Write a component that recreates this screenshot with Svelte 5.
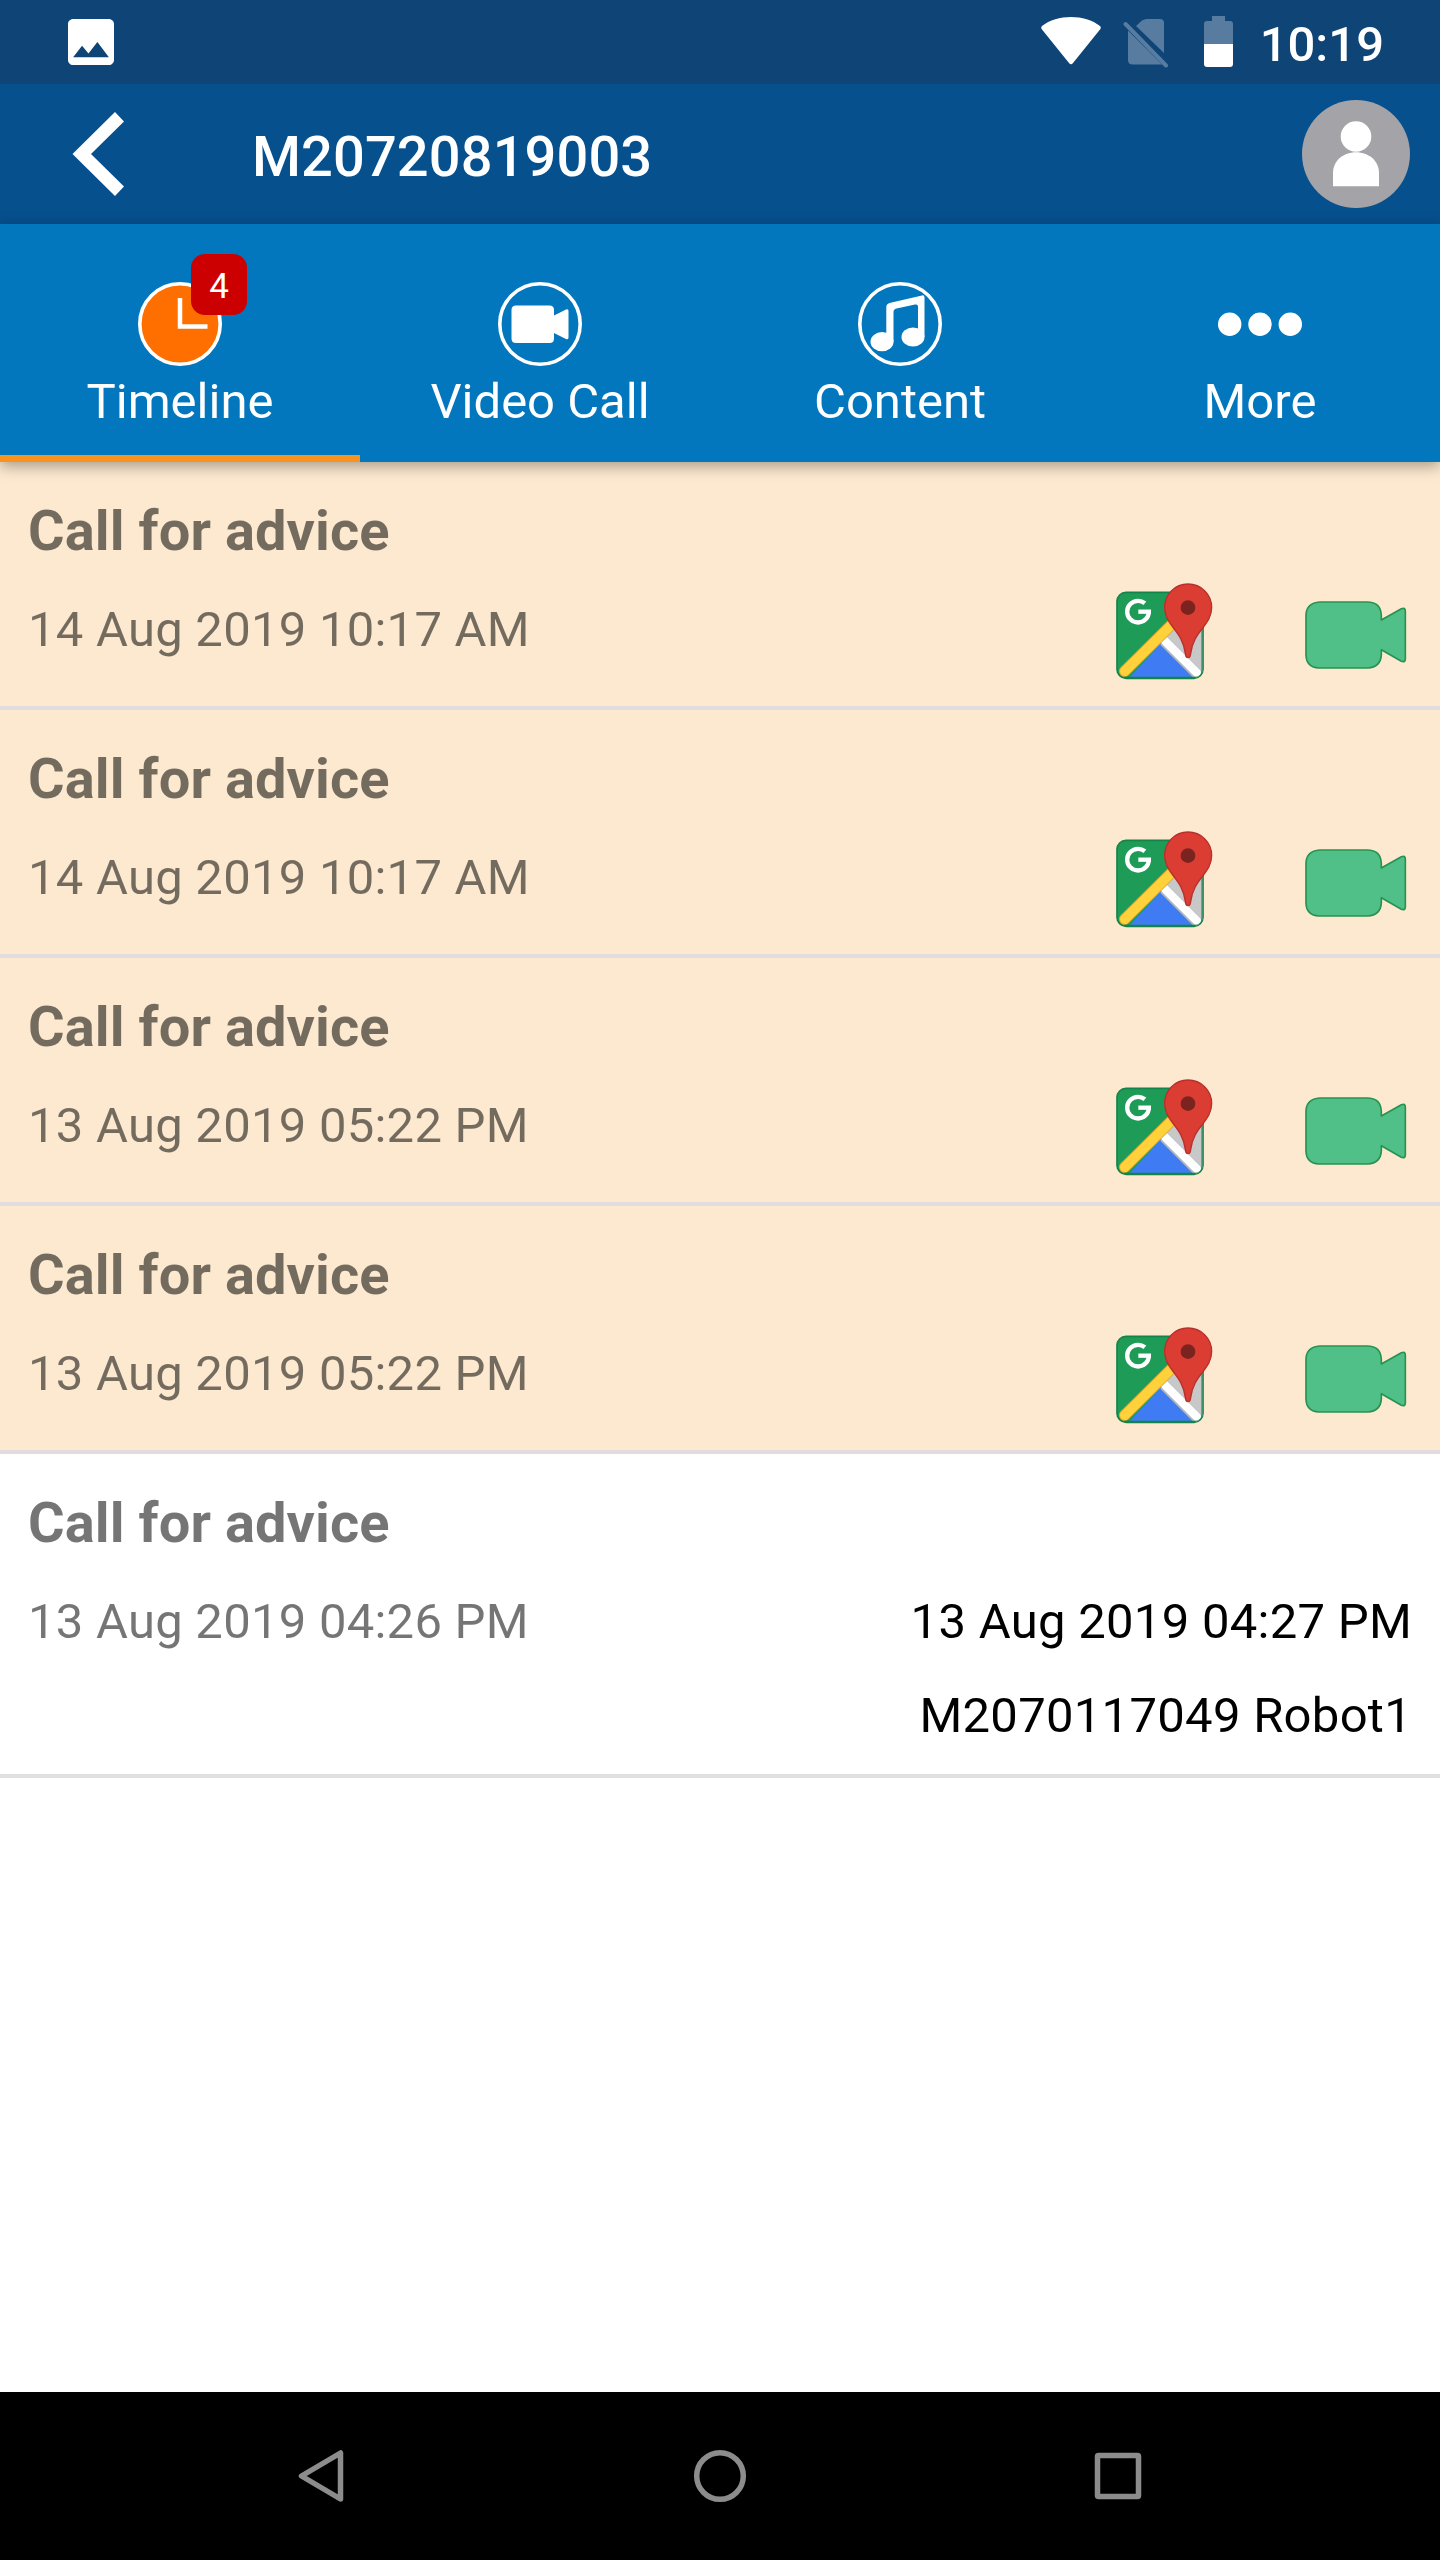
<script>
  let activeTab = 'timeline';

  const title = 'M20720819003';

  const tabs = [
    { id: 'timeline', label: 'Timeline', badge: 4 },
    { id: 'video', label: 'Video Call' },
    { id: 'content', label: 'Content' },
    { id: 'more', label: 'More' }
  ];

  const calls = [
    { name: 'Call for advice', date: '14 Aug 2019 10:17 AM', open: true },
    { name: 'Call for advice', date: '14 Aug 2019 10:17 AM', open: true },
    { name: 'Call for advice', date: '13 Aug 2019 05:22 PM', open: true },
    { name: 'Call for advice', date: '13 Aug 2019 05:22 PM', open: true },
    {
      name: 'Call for advice',
      date: '13 Aug 2019 04:26 PM',
      open: false,
      answered: '13 Aug 2019 04:27 PM',
      by: 'M2070117049 Robot1'
    }
  ];
</script>

<div class="screen">
  <div class="status-bar">
    <svg class="photo" width="46" height="46" viewBox="3 3 18 18">
      <path fill="#fff" d="M21 19V5c0-1.1-.9-2-2-2H5c-1.1 0-2 .9-2 2v14c0 1.1.9 2 2 2h14c1.1 0 2-.9 2-2zM8.5 13.5l2.5 3.01L14.5 12l4.5 6H5l3.5-4.5z" />
    </svg>
    <div class="status-icons">
      <svg width="60" height="49" viewBox="0 0 60 49">
        <path fill="#fff" d="M1 10C16-2 44-2 59 10Q60.500 11.500 59 13.500L32 47Q30 49.500 28 47L1 13.500Q-.5 11.500 1 10Z" />
      </svg>
      <svg class="sim" width="46" height="50" viewBox="0 0 46 50">
        <path fill="#587c9f" d="M13 7L19 1.500Q21 0 24 0H37Q41 0 41 4V34ZM5 11.500L39 45.500H10Q5 45.500 5 41Z" />
        <path stroke="#587c9f" stroke-width="4" stroke-linecap="round" d="M2.500 5L43 46.500" />
      </svg>
      <svg class="battery" width="29" height="51" viewBox="0 0 29 51">
        <path fill="#587c9f" d="M8 0H21V5H26Q29 5 29 8V28H0V8Q0 5 3 5H8Z" />
        <path fill="#fff" d="M0 28H29V48Q29 51 26 51H3Q0 51 0 48Z" />
      </svg>
      <span class="time">10:19</span>
    </div>
  </div>

  <header class="app-bar">
    <svg class="back" width="53" height="86" viewBox="0 0 53 86">
      <path fill="#fff" d="M43 1L52 10.500L19 43L52 75.500L43 85L0.500 43Z" />
    </svg>
    <h1>{title}</h1>
    <svg class="avatar" width="108" height="108" viewBox="0 0 108 108">
      <circle cx="54" cy="54" r="54" fill="#a3a3a8" />
      <circle cx="54" cy="36.500" r="15.300" fill="#fff" />
      <path fill="#fff" d="M31 86.300V73C31 61 41 52.300 54 52.300S77 61 77 73V86.300Z" />
    </svg>
  </header>

  <nav class="tabs">
    {#each tabs as tab}
      <button class="tab" class:active={tab.id === activeTab} on:click={() => (activeTab = tab.id)}>
        <span class="tab-icon">
          <svg width="84" height="84" viewBox="0 0 84 84">
            {#if tab.id === 'timeline'}
              <circle cx="42" cy="42" r="40.200" fill="#ff6f00" stroke="#fff" stroke-width="3.600" />
              <path fill="none" stroke="#fff" stroke-width="4.500" d="M42 16V44.500H69.500" />
            {:else if tab.id === 'video'}
              <circle cx="42" cy="42" r="40.200" fill="none" stroke="#fff" stroke-width="3.600" />
              <path fill="#fff" d="M18 23.500H51.500Q56 23.500 56 28V33.500L68 27.500Q70.500 26.500 70.500 29V55.500Q70.500 58 68 57L56 51V56.500Q56 61 51.500 61H18Q13.500 61 13.500 56.500V28Q13.500 23.500 18 23.500Z" />
            {:else if tab.id === 'content'}
              <circle cx="42" cy="42" r="40.200" fill="none" stroke="#fff" stroke-width="3.600" />
              <ellipse cx="24" cy="59.700" rx="11.500" ry="9.600" fill="#fff" />
              <ellipse cx="55" cy="55" rx="11.500" ry="9.600" fill="#fff" />
              <path fill="#fff" d="M28.300 60V25Q28.300 22 31.500 21L64 13.400Q66.500 13 66.500 15.500V55H60V24.500Q60 22 57 22.600L38.500 26.500Q35.500 27.200 35.500 30V60Z" />
            {:else}
              <circle cx="11.700" cy="42.300" r="11.700" fill="#fff" />
              <circle cx="42" cy="42.300" r="11.700" fill="#fff" />
              <circle cx="72.300" cy="42.300" r="11.700" fill="#fff" />
            {/if}
          </svg>
          {#if tab.badge}
            <span class="badge">{tab.badge}</span>
          {/if}
        </span>
        <span class="tab-label">{tab.label}</span>
      </button>
    {/each}
  </nav>

  <main class="list">
    {#each calls as call}
      <div class="row" class:open={call.open}>
        <div class="info">
          <div class="name">{call.name}</div>
          <div class="date">{call.date}</div>
        </div>
        {#if call.open}
          <div class="actions">
            <svg width="97" height="97" viewBox="78 69 291 291">
              <defs>
                <clipPath id="map-tile"><rect x="82" y="98" width="256" height="256" rx="25" /></clipPath>
              </defs>
              <rect x="81" y="97" width="258" height="258" rx="27" fill="#1e9b57" stroke="#14834a" stroke-width="5" />
              <g clip-path="url(#map-tile)">
                <path fill="#c8c8c8" d="M340 150V345L215 235L255 185Z" />
                <path fill="#3f7cf3" d="M213 250L120 351H314Z" />
                <path stroke="#aeb7c4" stroke-width="32" d="M222 243L326 347" />
                <path stroke="#fff" stroke-width="25" stroke-linecap="round" d="M222 240L321 339" />
                <path stroke="#e4ad31" stroke-width="34" stroke-linecap="round" d="M104 334L250 189" />
                <path stroke="#ffd23c" stroke-width="28" stroke-linecap="round" d="M104 334L250 189" />
                <path fill="none" stroke="#14834a" stroke-width="7" d="M100 354H314Q338 354 338 330V200" />
              </g>
              <circle cx="144" cy="155" r="32.500" fill="none" stroke="#fff" stroke-width="13" pathLength="360" stroke-dasharray="308 52" />
              <path stroke="#fff" stroke-width="13" d="M145 155H183" />
              <path fill="#db3d33" stroke="#b92f2b" stroke-width="4" d="M294 72C254 72 224 104 224 142C224 198 278 210 286 281C287 290 289 293 294 293S301 290 302 281C310 210 365 198 365 142C365 104 334 72 294 72Z" />
              <circle cx="294" cy="143" r="22" fill="#7b231f" />
            </svg>
            <svg width="102" height="68" viewBox="646 124 306 204">
              <path fill="#50c088" stroke="#279350" stroke-width="5" stroke-linejoin="round" d="M690 127H832Q874 127 875 168V181L935 147Q947 143 947 154V298Q947 309 935 305L875 270V285Q873 323 834 325H688Q650 323 649 286V166Q650 130 690 127Z" />
            </svg>
          </div>
        {:else}
          <div class="answer">
            <div>{call.answered}</div>
            <div>{call.by}</div>
          </div>
        {/if}
      </div>
    {/each}
  </main>

  <footer class="nav-bar">
    <svg width="56" height="56" viewBox="0 0 56 56">
      <path d="M46.500 5V51L7.500 28Z" />
    </svg>
    <svg width="56" height="56" viewBox="0 0 56 56">
      <circle cx="28" cy="28" r="23.300" />
    </svg>
    <svg width="56" height="56" viewBox="0 0 56 56">
      <rect x="7.500" y="7.500" width="41" height="41" rx="1" />
    </svg>
  </footer>
</div>

<style>
  :global(body) {
    margin: 0;
    background: #fff;
  }

  .screen {
    display: flex;
    flex-direction: column;
    width: 1440px;
    height: 2560px;
    background: #fff;
    font-family: Roboto, sans-serif;
    overflow: hidden;
  }

  svg {
    display: block;
    flex: none;
  }

  .status-bar {
    display: flex;
    justify-content: space-between;
    height: 84px;
    box-sizing: border-box;
    padding: 0 56px 0 68px;
    background: #0f4477;
  }

  .photo {
    margin-top: 19px;
  }

  .status-icons {
    display: flex;
    align-items: flex-start;
    padding-top: 16px;
  }

  .sim {
    margin: 3px 35px 0 22px;
  }

  .time {
    margin: 0 0 0 27px;
    color: #fff;
    font-size: 49px;
    font-weight: 500;
    line-height: 58px;
  }

  .app-bar {
    display: flex;
    align-items: center;
    height: 140px;
    box-sizing: border-box;
    padding: 0 30px 0 72px;
    background: #06508e;
  }

  h1 {
    flex: 1;
    margin: 6px 0 0 127px;
    color: #fff;
    font-size: 56px;
    font-weight: 500;
    letter-spacing: 0.1px;
    line-height: 66px;
  }

  .tabs {
    position: relative;
    z-index: 1;
    display: grid;
    grid-template-columns: repeat(4, 1fr);
    height: 238px;
    background: #0277bd;
    box-shadow: 0 4px 14px rgba(0, 0, 0, 0.35);
  }

  .tab {
    display: flex;
    flex-direction: column;
    align-items: center;
    gap: 7px;
    padding: 58px 0 0;
    border: 0;
    border-bottom: 7px solid transparent;
    background: none;
    color: #fff;
    font-family: inherit;
  }

  .tab.active {
    border-bottom-color: #f7931e;
  }

  .tab-icon {
    position: relative;
  }

  .badge {
    position: absolute;
    top: -28px;
    left: 53px;
    width: 56px;
    height: 61px;
    border-radius: 14px;
    background: #cc0000;
    font-size: 35px;
    line-height: 65px;
    text-align: center;
  }

  .tab-label {
    font-size: 49px;
    line-height: 58px;
  }

  .list {
    flex: 1;
  }

  .row {
    display: flex;
    justify-content: space-between;
    min-height: 248px;
    box-sizing: border-box;
    padding: 36px 28px 0;
    border-bottom: 4px solid #e0e0e0;
  }

  .row.open {
    background: #fde9d0;
    border-bottom-color: #e0dce0;
  }

  .row:not(.open) {
    padding-bottom: 29px;
  }

  .info {
    color: rgba(0, 0, 0, 0.54);
  }

  .name {
    font-size: 56px;
    font-weight: 700;
    letter-spacing: 0.08px;
    line-height: 66px;
  }

  .date {
    margin-top: 37px;
    font-size: 49px;
    letter-spacing: 0.25px;
    line-height: 58px;
  }

  .actions {
    display: flex;
    align-items: flex-start;
    gap: 92px;
    padding: 85px 5px 0 0;
  }

  .actions svg:last-child {
    margin-top: 18px;
  }

  .answer {
    display: flex;
    flex-direction: column;
    gap: 36px;
    padding-top: 103px;
    color: #000;
    font-size: 49px;
    letter-spacing: 0.28px;
    line-height: 58px;
    text-align: right;
  }

  .nav-bar {
    display: flex;
    align-items: center;
    justify-content: center;
    gap: 342px;
    height: 168px;
    background: #000;
  }

  .nav-bar svg {
    fill: none;
    stroke: #8c8c8c;
    stroke-width: 5.5;
    stroke-linejoin: round;
  }
</style>
